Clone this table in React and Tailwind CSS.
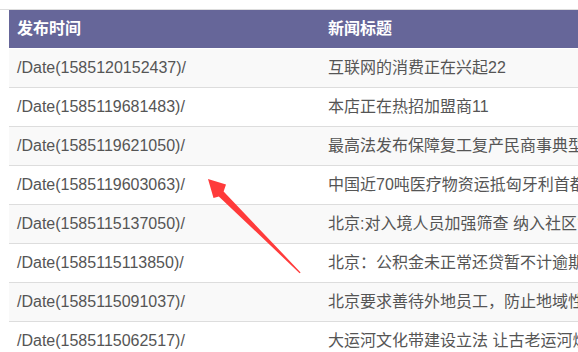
import React from 'react';

const ROWS = [
  { time: '/Date(1585120152437)/', title: '互联网的消费正在兴起22' },
  { time: '/Date(1585119681483)/', title: '本店正在热招加盟商11' },
  { time: '/Date(1585119621050)/', title: '最高法发布保障复工复产民商事典型案例 依法平等保护' },
  { time: '/Date(1585119603063)/', title: '中国近70吨医疗物资运抵匈牙利首都布达佩斯' },
  { time: '/Date(1585115137050)/', title: '北京:对入境人员加强筛查 纳入社区管理' },
  { time: '/Date(1585115113850)/', title: '北京：公积金未正常还贷暂不计逾期' },
  { time: '/Date(1585115091037)/', title: '北京要求善待外地员工，防止地域性歧视' },
  { time: '/Date(1585115062517)/', title: '大运河文化带建设立法 让古老运河焕发新活力' },
];

const Arrow = () => (
  <svg className="absolute left-0 top-0 pointer-events-none" width="578" height="352" viewBox="0 0 578 352">
    <polygon
      points="208,179 226,184.5 223.6,191.4 300.6,272.4 299.6,273.2 218.8,196.4 213.5,198"
      fill="#ff3b3b"
    />
  </svg>
);

export default function App() {
  return (
    <div
      className="relative w-[578px] h-[352px] overflow-hidden bg-white"
      style={{ fontFamily: '"Liberation Sans", Arial, "Noto Sans CJK SC", sans-serif' }}
    >
      <div className="mt-[9px] border-t border-[#dddddd]" />
      <div className="ml-[9px] w-[900px]">
        <div className="grid grid-cols-[311px_1fr] h-[39px] items-center bg-[#666699] text-white font-bold text-[16px] border-b border-white">
          <div className="pl-2">发布时间</div>
          <div className="pl-2 whitespace-nowrap">新闻标题</div>
        </div>
        {ROWS.map((row, i) => (
          <div
            key={row.time}
            className={`grid grid-cols-[311px_1fr] h-[39px] items-center border-b border-[#dddddd] text-[16px] text-[#555555] ${
              i % 2 === 0 ? 'bg-[#f9f9f9]' : 'bg-white'
            }`}
          >
            <div className="pl-2 whitespace-nowrap">{row.time}</div>
            <div className="pl-2 whitespace-nowrap">{row.title}</div>
          </div>
        ))}
      </div>
      <Arrow />
    </div>
  );
}
